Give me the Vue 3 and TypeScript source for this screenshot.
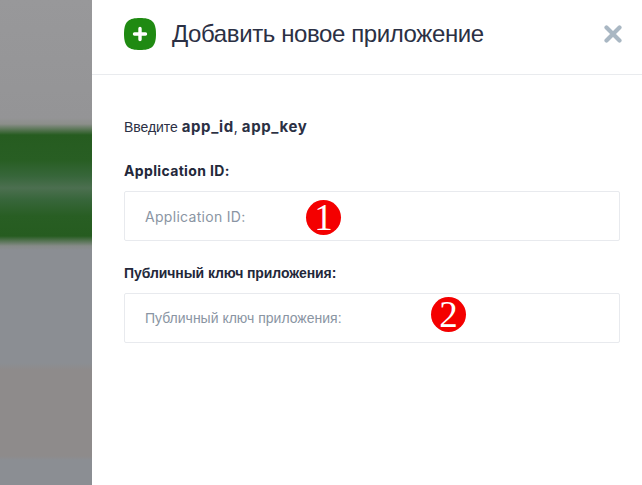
<template>
  <div class="page">
    <div class="backdrop"></div>
    <aside class="panel">
      <header class="head">
        <span class="add-icon">
          <svg width="32" height="32" viewBox="0 0 32 32">
            <path d="M16 0C27 0 32 3 32 16S27 32 16 32 0 29 0 16 5 0 16 0Z" fill="#1f8a12" />
            <path d="M16 10.500V21.500M10.500 16H21.500" stroke="#fff" stroke-width="3.400" stroke-linecap="round" />
          </svg>
        </span>
        <h1>Добавить новое приложение</h1>
        <svg class="close" width="18" height="18" viewBox="0 0 18 18">
          <path d="M2.500 2.500L15.500 15.500M15.500 2.500L2.500 15.500" stroke="#a9b7c3" stroke-width="4.200" stroke-linecap="round" />
        </svg>
      </header>
      <div class="body">
        <p class="intro"><span class="ru">Введите</span> <strong>app_id</strong>, <strong>app_key</strong></p>
        <div v-for="field in fields" :key="field.label" class="field">
          <label :class="{ ru: field.cyrillic }">{{ field.label }}</label>
          <div class="input-wrap">
            <input type="text" :class="{ ru: field.cyrillic }" :placeholder="field.label" />
            <span class="marker" :class="field.markerClass">{{ field.marker }}</span>
          </div>
        </div>
      </div>
    </aside>
  </div>
</template>

<script setup lang="ts">
interface Field {
  label: string
  marker: string
  markerClass: string
  cyrillic: boolean
}

const fields: Field[] = [
  { label: 'Application ID:', marker: '1', markerClass: 'first', cyrillic: false },
  { label: 'Публичный ключ приложения:', marker: '2', markerClass: 'second', cyrillic: true },
]
</script>

<style>
html,
body {
  margin: 0;
  background: #fff;
}
</style>

<style scoped>
.page {
  display: flex;
  width: 642px;
  height: 485px;
  overflow: hidden;
  font-family: Inter, "Liberation Sans", sans-serif;
}

/* blurred page behind the drawer */
.backdrop {
  flex: 0 0 92px;
  background: linear-gradient(
    to bottom,
    #98989a 0,
    #949496 118px,
    #8c8f8b 124px,
    #265c20 135px,
    #285e23 160px,
    #37663a 176px,
    #4c6f50 188px,
    #37663a 200px,
    #285e23 216px,
    #265c20 236px,
    #868b88 246px,
    #8b8e93 250px,
    #8b8e93 363px,
    #8e8b8b 370px,
    #8e8b8b 456px,
    #8b8e93 460px
  );
}

.panel {
  flex: 1;
  background: #fff;
}

.head {
  display: flex;
  align-items: center;
  height: 74px;
  padding: 0 20px 0 32px;
  border-bottom: 1px solid #e9ebee;
}

.add-icon {
  display: flex;
  margin: -7px 16px 0 0;
}

h1 {
  flex: 1;
  margin: -6px 0 0;
  font: 400 24px "Liberation Sans", sans-serif;
  letter-spacing: -0.4px;
  color: #2b3044;
}

.close {
  margin-top: -7px;
}

.body {
  padding: 43px 22px 0 32px;
}

.intro {
  margin: 0 0 26px;
  font-size: 14px;
  line-height: 18px;
  color: #2b3044;
}

.intro .ru {
  letter-spacing: -0.05px;
}

.intro strong {
  font-weight: 700;
  font-size: 15px;
  letter-spacing: 0.6px;
}

.field {
  margin-bottom: 23px;
}

label {
  display: block;
  margin-bottom: 11px;
  font-size: 14px;
  line-height: 18px;
  font-weight: 700;
  color: #23283a;
  letter-spacing: 0.35px;
}

.input-wrap {
  position: relative;
}

input {
  display: block;
  box-sizing: border-box;
  width: 100%;
  height: 50px;
  padding: 0 20px;
  border: 1px solid #e8eaee;
  border-radius: 2px;
  outline: none;
  background: #fff;
  font-family: Inter, sans-serif;
  font-size: 14px;
  letter-spacing: 0.3px;
}

input::placeholder {
  color: #8a95a3;
  opacity: 1;
}

.ru {
  font-family: "Liberation Sans", sans-serif;
}

label.ru {
  font-size: 14px;
  letter-spacing: -0.08px;
}

input.ru {
  font-size: 14px;
  letter-spacing: 0;
}

.marker {
  position: absolute;
  display: flex;
  align-items: center;
  justify-content: center;
  width: 35px;
  height: 35px;
  border-radius: 50%;
  background: #f40000;
  color: #fff;
  font: 400 37px/35px "Liberation Serif", serif;
}

.marker.first {
  left: 182px;
  top: 9px;
}

.marker.second {
  left: 307px;
  top: 4px;
}
</style>
